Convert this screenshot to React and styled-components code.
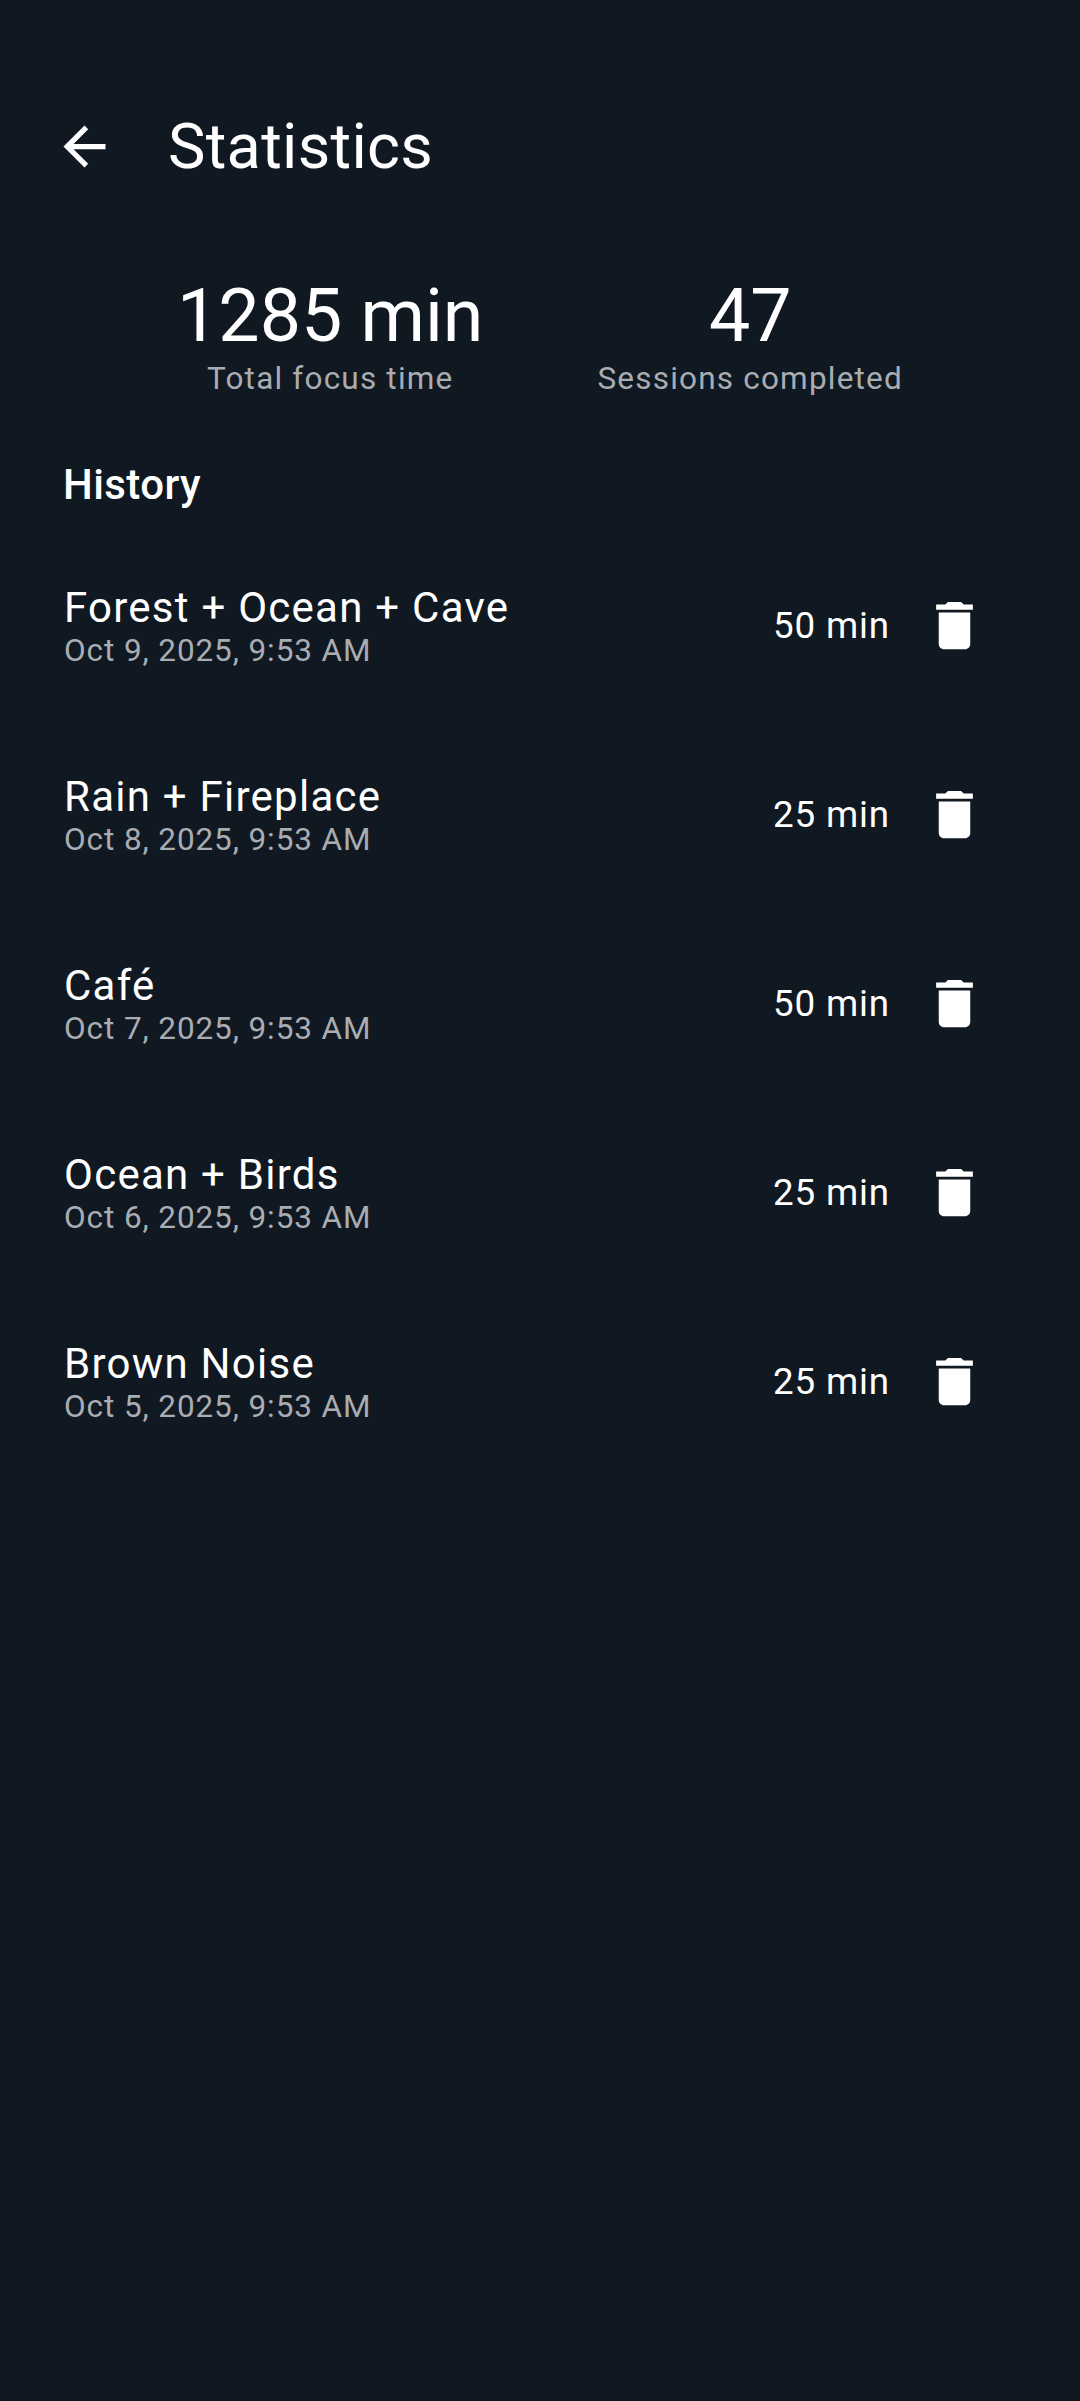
import React from "react"
import styled, { createGlobalStyle } from "styled-components"

const GlobalStyle = createGlobalStyle`
    html, body {
        margin: 0;
        padding: 0;
        background: #101822;
    }
`

const Page = styled.div`
    width: 1080px;
    height: 2401px;
    overflow: hidden;
    background: #101822;
    color: #ffffff;
    font-family: Roboto, "Liberation Sans", sans-serif;
`

const TopBar = styled.header`
    display: flex;
    align-items: center;
    height: 147px;
    padding: 73px 0 0 21px;
`

const BackButton = styled.button`
    display: flex;
    align-items: center;
    justify-content: center;
    width: 126px;
    height: 126px;
    margin-right: 21px;
    padding: 0;
    border: none;
    background: none;
    color: #ffffff;
`

const Title = styled.h1`
    margin: 0;
    font-size: 63px;
    font-weight: 400;
    line-height: 84px;
    letter-spacing: 0.3px;
`

const Stats = styled.section`
    display: flex;
    justify-content: space-evenly;
    margin-top: 54px;
    padding: 0 63px;
`

const Stat = styled.div`
    display: flex;
    flex-direction: column;
    align-items: center;
`

const StatValue = styled.div`
    font-size: 73.5px;
    line-height: 84px;
`

const StatLabel = styled.div`
    font-size: 31.5px;
    line-height: 42px;
    letter-spacing: 1.2px;
    color: #a9adb2;
`

const SectionTitle = styled.h2`
    margin: 53px 0 0;
    padding: 0 63px;
    font-size: 42px;
    font-weight: 500;
    line-height: 63px;
    letter-spacing: 0.4px;
`

const HistoryList = styled.div`
    display: flex;
    flex-direction: column;
    margin-top: 15px;
`

const Row = styled.div`
    display: flex;
    align-items: center;
    height: 189px;
    padding: 0 63px 0 64px;
`

const RowText = styled.div`
    flex: 1;
`

const RowName = styled.div`
    font-size: 42px;
    line-height: 50px;
    letter-spacing: 1.25px;
`

const RowDate = styled.div`
    font-size: 31.5px;
    line-height: 36px;
    letter-spacing: 0.9px;
    color: #a9adb2;
`

const RowMinutes = styled.div`
    font-size: 36.75px;
    letter-spacing: 0.85px;
`

const DeleteButton = styled.button`
    display: flex;
    align-items: center;
    justify-content: center;
    width: 126px;
    height: 126px;
    margin-left: 1px;
    padding: 0;
    border: none;
    background: none;
    color: #ffffff;
`

const BackIcon = () => (
    <svg width="63" height="63" viewBox="0 0 24 24" fill="currentColor">
        <path d="M20 11H7.83l5.59-5.59L12 4l-8 8 8 8 1.41-1.41L7.83 13H20v-2z" />
    </svg>
)

const TrashIcon = () => (
    <svg width="63" height="63" viewBox="0 0 24 24" fill="currentColor">
        <path d="M6 19c0 1.1.9 2 2 2h8c1.1 0 2-.9 2-2V7H6v12zM19 4h-3.5l-1-1h-5l-1 1H5v2h14V4z" />
    </svg>
)

const sessions = [
    { name: "Forest + Ocean + Cave", date: "Oct 9, 2025, 9:53 AM", minutes: 50 },
    { name: "Rain + Fireplace", date: "Oct 8, 2025, 9:53 AM", minutes: 25 },
    { name: "Café", date: "Oct 7, 2025, 9:53 AM", minutes: 50 },
    { name: "Ocean + Birds", date: "Oct 6, 2025, 9:53 AM", minutes: 25 },
    { name: "Brown Noise", date: "Oct 5, 2025, 9:53 AM", minutes: 25 },
]

const App = () => (
    <Page>
        <GlobalStyle />
        <TopBar>
            <BackButton aria-label="Back"><BackIcon /></BackButton>
            <Title>Statistics</Title>
        </TopBar>
        <Stats>
            <Stat>
                <StatValue>1285 min</StatValue>
                <StatLabel>Total focus time</StatLabel>
            </Stat>
            <Stat>
                <StatValue>47</StatValue>
                <StatLabel>Sessions completed</StatLabel>
            </Stat>
        </Stats>
        <SectionTitle>History</SectionTitle>
        <HistoryList>
            {sessions.map((s) => (
                <Row key={s.date}>
                    <RowText>
                        <RowName>{s.name}</RowName>
                        <RowDate>{s.date}</RowDate>
                    </RowText>
                    <RowMinutes>{s.minutes} min</RowMinutes>
                    <DeleteButton aria-label="Delete"><TrashIcon /></DeleteButton>
                </Row>
            ))}
        </HistoryList>
    </Page>
)

export default App
